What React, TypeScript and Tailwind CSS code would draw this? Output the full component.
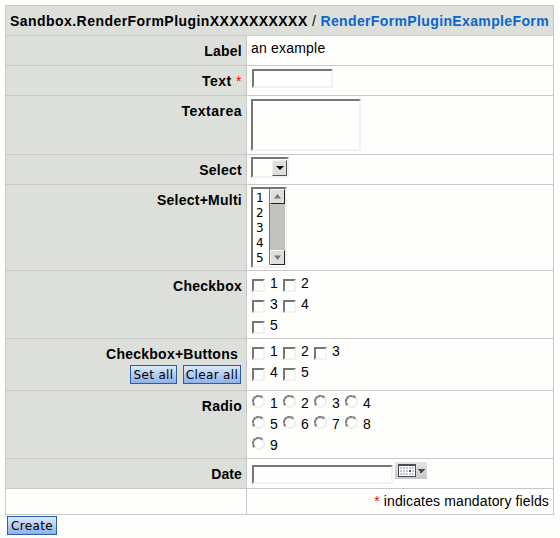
import type { ReactNode } from 'react'

const field =
  'bg-[#fefefc] border-2 border-t-[#767676] border-l-[#767676] border-r-[#f2f2f2] border-b-[#f2f2f2]'

function Row({
  label,
  h,
  tracking = 'tracking-[0.25px]',
  children,
}: {
  label: ReactNode
  h: string
  tracking?: string
  children: ReactNode
}) {
  return (
    <div className={`flex border-b border-[#c8c8c8] ${h}`}>
      <div
        className={`w-[241px] shrink-0 border-r border-[#c8c8c8] bg-[#dddfdb] pt-[7px] pr-[4px] text-right font-bold ${tracking}`}
      >
        {label}
      </div>
      <div className="flex-1">{children}</div>
    </div>
  )
}

function Button({ w, children }: { w: string; children: string }) {
  return (
    <button
      className={`h-[19px] shrink-0 border border-[#2a5db0] bg-linear-to-b from-[#dce9fc] to-[#8eb2e8] pt-px text-center font-['DejaVu_Sans',sans-serif] text-[12px] leading-[16px] font-normal tracking-[0.35px] whitespace-nowrap ${w}`}
    >
      {children}
    </button>
  )
}

function Radio() {
  return (
    <svg className="block" width="13" height="13" viewBox="0 0 13 13" fill="none" strokeWidth="2.2">
      <path d="M10.5 2.5A5.1 5.1 0 0 1 3 10.5" stroke="#f0f0f0" />
      <path d="M2.4 10.2A5.1 5.1 0 0 1 10.6 2.8" stroke="#808080" strokeDasharray="3 .3" />
    </svg>
  )
}

function Options({ rows, radio = false }: { rows: number[][]; radio?: boolean }) {
  return (
    <div className="pt-1 pl-[5px]">
      {rows.map((r) => (
        <div key={r[0]} className="flex h-[21px]">
          {r.map((n) => (
            <label key={n} className="flex w-[31px]">
              {radio ? <Radio /> : <span className={`mt-1 size-[13px] ${field}`} />}
              <span className="ml-[5px]">{n}</span>
            </label>
          ))}
        </div>
      ))}
    </div>
  )
}

function ScrollButton({ up = false }: { up?: boolean }) {
  return (
    <span className="flex h-[15px] w-[15px] items-center justify-center border border-t-[#f4f4f4] border-r-[#222] border-b-[#222] border-l-[#f4f4f4] bg-[#dddfdb]">
      <svg width="7" height="5" viewBox="0 0 7 5">
        <path d={up ? 'M0 4.5L3.5 0L7 4.5Z' : 'M0 .5H7L3.5 5Z'} fill="#777" />
      </svg>
    </span>
  )
}

function CalendarButton() {
  return (
    <button className="mt-[3px] ml-[2px] h-[17px] w-8 bg-linear-to-b from-[#e3e5e3] to-[#c6c9c6]">
      <svg className="block" width="32" height="17" viewBox="0 0 32 17" shapeRendering="crispEdges">
        <rect x="3" y="2" width="18" height="13" fill="#474d5c" />
        <rect x="4" y="4" width="16" height="10" fill="#fff" />
        {[5, 8, 11].map((y) =>
          [5, 8, 11, 14, 17].map((x) => (
            <rect key={`${x}-${y}`} x={x - (x > 14 ? 0 : 0)} y={y} width="2" height="2" fill={x === 14 && y === 8 ? '#0b66cc' : '#c3c6c8'} />
          )),
        )}
        <path d="M22.5 7H30L26.2 11.5Z" fill="#474d5c" />
      </svg>
    </button>
  )
}

export default function App() {
  return (
    <main className="h-[538px] w-[560px] bg-[#fefefc] pt-[5px] pl-[5px] font-['Liberation_Sans',Arial,sans-serif] text-[14px] leading-4 text-black">
      <div className="w-[549px] border-x border-t border-[#c8c8c8]">
        <div className="flex h-[30px] justify-between border-b border-[#c8c8c8] bg-[#dddfdb] pt-[7px] pr-1 pl-1 font-bold whitespace-nowrap">
          <span className="tracking-[0.45px]">Sandbox.RenderFormPluginXXXXXXXXXX</span>
          <span className="font-normal">/</span>
          <a className="tracking-[0.37px] text-[#0b66cc]">RenderFormPluginExampleForm</a>
        </div>
        <Row label="Label" h="h-[30px]">
          <div className="pt-1 pl-1 tracking-[0.2px]">an example</div>
        </Row>
        <Row label={<>Text <span className="font-normal text-[#ff0000]">*</span></>} h="h-[30px]" tracking="tracking-[0.5px]">
          <input className={`mt-[3px] ml-[5px] block h-[19px] w-[81px] ${field}`} />
        </Row>
        <Row label="Textarea" h="h-[59px]" tracking="tracking-[0.5px]">
          <textarea className={`mt-[3px] ml-1 block h-[52px] w-[110px] resize-none ${field}`} />
        </Row>
        <Row label="Select" h="h-[30px]">
          <div className={`mt-[2px] ml-1 flex h-[21px] w-[38px] justify-end ${field}`}>
            <span className="mt-px flex h-4 w-[15px] items-center justify-center border-t border-r border-b border-l border-t-[#f2f2f2] border-r-[#555] border-b-[#555] border-l-[#f2f2f2] bg-[#dddfdb]">
              <svg width="8" height="4" viewBox="0 0 8 4">
                <path d="M0 0H8L4 4Z" fill="#000" />
              </svg>
            </span>
          </div>
        </Row>
        <Row label="Select+Multi" h="h-[86px]">
          <div className={`mt-[2px] ml-1 flex h-[81px] w-9 ${field}`}>
            <div className="w-4 shrink-0 pt-[2px] pl-[3px] font-['DejaVu_Sans',sans-serif] text-[12px] leading-[15px]">
              {[1, 2, 3, 4, 5].map((n) => (
                <div key={n}>{n}</div>
              ))}
            </div>
            <div className="flex h-[76px] w-4 flex-col justify-between border-l border-[#777] bg-[#c1c3be]">
              <ScrollButton up />
              <ScrollButton />
            </div>
          </div>
        </Row>
        <Row label="Checkbox" h="h-[68px]">
          <Options rows={[[1, 2], [3, 4], [5]]} />
        </Row>
        <Row
          label={
            <>
              <div className="pr-1">Checkbox+Buttons</div>
              <div className="mt-[3px] flex justify-end gap-[6px] pr-px">
                <Button w="w-[47px]">Set all</Button>
                <Button w="w-[58px]">Clear all</Button>
              </div>
            </>
          }
          h="h-[52px]"
        >
          <Options rows={[[1, 2, 3], [4, 5]]} />
        </Row>
        <Row label="Radio" h="h-[68px]">
          <Options radio rows={[[1, 2, 3, 4], [5, 6, 7, 8], [9]]} />
        </Row>
        <Row label="Date" h="h-[30px]" tracking="tracking-[0.1px]">
          <div className="flex">
            <input className={`mt-[6px] ml-[5px] block h-[19px] w-[141px] ${field}`} />
            <CalendarButton />
          </div>
        </Row>
        <div className="flex h-[26px] border-b border-[#c8c8c8]">
          <div className="w-[241px] border-r border-[#c8c8c8]" />
          <div className="flex-1 pt-1 pr-1 text-right tracking-[0.13px]">
            <span className="text-[#ff0000]">*</span> indicates mandatory fields
          </div>
        </div>
      </div>
      <div className="mt-px flex pl-[2px]">
        <Button w="w-[50px]">Create</Button>
      </div>
    </main>
  )
}
